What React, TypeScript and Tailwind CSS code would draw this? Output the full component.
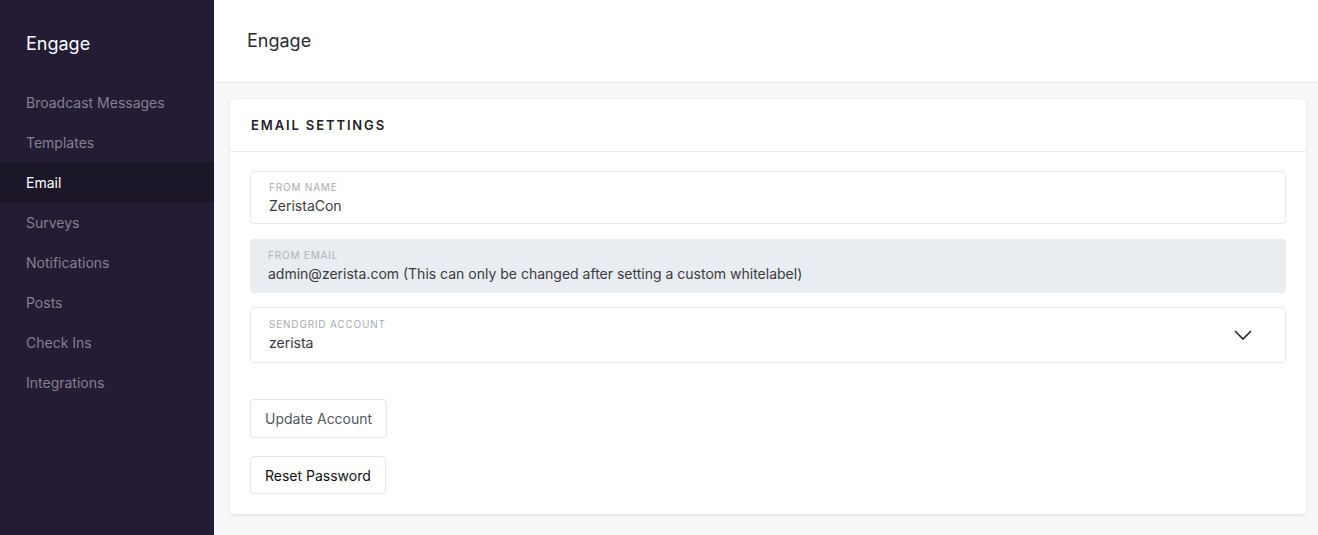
import React from "react";

const nav = [
  "Broadcast Messages",
  "Templates",
  "Email",
  "Surveys",
  "Notifications",
  "Posts",
  "Check Ins",
  "Integrations",
];

export default function App() {
  return (
    <div
      className="flex h-[535px] w-full overflow-hidden bg-[#f7f8fa]"
      style={{ fontFamily: "Inter, 'Noto Sans', sans-serif" }}
    >
      <aside className="w-[214px] shrink-0 bg-[#231c34]">
        <div className="flex h-[82px] items-center pl-[26px]">
          <span className="mt-[6px] text-[18px] leading-[28px] text-white">Engage</span>
        </div>
        <nav className="flex flex-col">
          {nav.map((n) => (
            <div
              key={n}
              className={
                n === "Email"
                  ? "flex h-[40px] items-center bg-[#1c1629] pl-[26px] text-[14px] text-white"
                  : "flex h-[40px] items-center pl-[26px] text-[14px] text-[#857f92]"
              }
            >
              {n}
            </div>
          ))}
        </nav>
      </aside>
      <main className="flex min-w-0 flex-1 flex-col">
        <header className="flex h-[83px] shrink-0 items-center border-b border-[#e8eaee] bg-white pl-[33px]">
          <span className="text-[18px] leading-[28px] text-[#2b2b2f]">Engage</span>
        </header>
        <div className="pl-4 pr-3 pt-4">
          <section className="rounded-[4px] bg-white shadow-[0_1px_3px_rgba(0,0,0,0.12)]">
            <div className="flex h-[53px] items-center border-b border-[#e8eaee] pl-[21px] pt-[2px]">
              <span className="text-[13px] font-semibold tracking-[0.145em] text-[#222226]">
                EMAIL SETTINGS
              </span>
            </div>
            <div className="flex flex-col px-5 pb-[20px] pt-[19px]">
              <div className="flex h-[53px] flex-col justify-center rounded-[4px] border border-[#e6e8ec] bg-white px-[18px]">
                <span className="text-[10px] leading-[13px] tracking-[0.08em] text-[#a9abb0]">FROM NAME</span>
                <span className="mt-[3px] text-[14px] leading-[18px] text-[#3a3b40]">ZeristaCon</span>
              </div>
              <div className="mt-[15px] flex h-[54px] flex-col justify-center rounded-[4px] bg-[#e9ecf0] px-[18px]">
                <span className="text-[10px] leading-[13px] tracking-[0.08em] text-[#aeb1b6]">FROM EMAIL</span>
                <span className="mt-[3px] text-[14px] leading-[18px] text-[#3a3b40]">
                  admin@zerista.com (This can only be changed after setting a custom whitelabel)
                </span>
              </div>
              <div className="mt-[14px] flex h-[56px] items-center rounded-[4px] border border-[#e6e8ec] bg-white px-[18px]">
                <div className="flex flex-1 flex-col">
                  <span className="text-[10px] leading-[13px] tracking-[0.08em] text-[#a9abb0]">SENDGRID ACCOUNT</span>
                  <span className="mt-[3px] text-[14px] leading-[18px] text-[#3a3b40]">zerista</span>
                </div>
                <svg width="18" height="10" viewBox="0 0 18 10" className="mr-[15px]">
                  <path d="M1 1l8 8 8-8" fill="none" stroke="#222" strokeWidth="1.6" />
                </svg>
              </div>
              <div className="mt-[36px]">
                <button className="h-[39px] rounded-[4px] border border-[#e3e5e9] bg-white px-[14px] text-[14px] text-[#555860]">
                  Update Account
                </button>
              </div>
              <div className="mt-[18px]">
                <button className="h-[38px] rounded-[4px] border border-[#e3e5e9] bg-white px-[14px] text-[14px] text-[#111]">
                  Reset Password
                </button>
              </div>
            </div>
          </section>
        </div>
      </main>
    </div>
  );
}
